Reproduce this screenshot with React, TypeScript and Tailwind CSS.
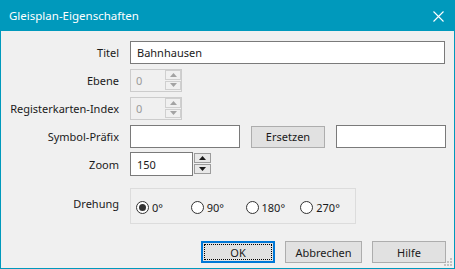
import React from 'react';

const font = { fontFamily: '"Noto Sans", "Open Sans", sans-serif' };

const Arrow = ({ up, disabled }: { up?: boolean; disabled?: boolean }) => (
    <svg width="7" height="4" viewBox="0 0 7 4">
        <polygon points={up ? '0,4 7,4 3.5,0' : '0,0 7,0 3.5,4'} fill={disabled ? '#a3a3a3' : '#1a1a1a'} />
    </svg>
);

const Label = ({ children }: { children: React.ReactNode }) => (
    <div className="w-[118px] shrink-0 text-right text-[#1a1a1a]">{children}</div>
);

const Radio = ({ label, checked }: { label: string; checked?: boolean }) => (
    <div className="w-[55px] flex items-center gap-[3px]">
        <span className="w-[13px] h-[13px] rounded-full border border-[#333333] bg-white flex items-center justify-center">
            {checked && <span className="w-[7px] h-[7px] rounded-full bg-[#333333]" />}
        </span>
        <span className="text-[#1a1a1a]">{label}</span>
    </div>
);

const Button = ({ children, primary, w }: { children: React.ReactNode; primary?: boolean; w: string }) => (
    <div
        className={`${w} h-[22px] flex items-center justify-center bg-[#e1e1e1] text-[#1a1a1a] ${
            primary ? 'border-2 border-[#0078d7] p-[1px]' : 'border border-[#adadad]'
        }`}
    >
        {primary ? (
            <div className="w-full h-full border border-dotted border-black flex items-center justify-center">{children}</div>
        ) : (
            children
        )}
    </div>
);

const DisabledSpinner = () => (
    <div className="w-[52px] h-[23px] border border-[#cccccc] flex items-stretch">
        <div className="flex-1 pl-[5px] flex items-center text-[#9a9a9a]">0</div>
        <div className="w-[16px] flex flex-col gap-[1px] pb-[1px]">
            <div className="h-[10px] border border-[#cfcfcf] flex items-center justify-center">
                <Arrow up disabled />
            </div>
            <div className="h-[10px] border border-[#cfcfcf] flex items-center justify-center">
                <Arrow disabled />
            </div>
        </div>
    </div>
);

export default function App() {
    return (
        <div style={font} className="w-[455px] h-[269px] border border-[#0099bc] bg-[#f0f0f0] flex flex-col text-[11px] leading-none select-none">
            {/* title bar */}
            <div className="h-[30px] bg-[#0099bc] flex items-center justify-between pl-[8px] pr-[10px] text-white text-[11.5px]">
                <span>Gleisplan-Eigenschaften</span>
                <svg width="11" height="11" viewBox="0 0 11 11">
                    <path d="M0.5 0.5 L10.5 10.5 M10.5 0.5 L0.5 10.5" stroke="white" strokeWidth="1.1" />
                </svg>
            </div>

            <div className="relative flex-1 flex flex-col pt-[10px]">
                <div className="flex items-center h-[23px]">
                    <Label>Titel</Label>
                    <div className="ml-[11px] w-[315px] h-[23px] border border-[#7a7a7a] bg-white flex items-center pl-[6px] text-[#1a1a1a]">
                        Bahnhausen
                    </div>
                </div>

                <div className="flex items-center h-[23px] mt-[5px]">
                    <Label>Ebene</Label>
                    <div className="ml-[11px]">
                        <DisabledSpinner />
                    </div>
                </div>

                <div className="flex items-center h-[23px] mt-[5px]">
                    <Label>Registerkarten-Index</Label>
                    <div className="ml-[11px]">
                        <DisabledSpinner />
                    </div>
                </div>

                <div className="flex items-center h-[23px] mt-[5px]">
                    <Label>Symbol-Präfix</Label>
                    <div className="ml-[11px] w-[110px] h-[23px] border border-[#7a7a7a] bg-white" />
                    <div className="ml-[11px]">
                        <Button w="w-[74px]">Ersetzen</Button>
                    </div>
                    <div className="ml-[11px] w-[110px] h-[23px] border border-[#7a7a7a] bg-white" />
                </div>

                <div className="flex items-center h-[24px] mt-[4px]">
                    <Label>Zoom</Label>
                    <div className="ml-[11px] w-[63px] h-[24px] border border-[#7a7a7a] bg-white flex items-center pl-[6px] text-[#1a1a1a]">
                        150
                    </div>
                    <div className="ml-[1px] w-[17px] h-[24px] flex flex-col gap-[1px] py-[1px]">
                        <div className="h-[10px] border border-[#9c9c9c] bg-[#e8e8e8] flex items-center justify-center">
                            <Arrow up />
                        </div>
                        <div className="h-[10px] border border-[#9c9c9c] bg-[#e8e8e8] flex items-center justify-center">
                            <Arrow />
                        </div>
                    </div>
                </div>

                <div className="flex items-start mt-[12px]">
                    <div className="pt-[10px]">
                        <Label>Drehung</Label>
                    </div>
                    <div className="ml-[11px] w-[226px] h-[36px] border border-[#dcdcdc] flex items-center pl-[5px] pt-[2px]">
                        <Radio label="0°" checked />
                        <Radio label="90°" />
                        <Radio label="180°" />
                        <Radio label="270°" />
                    </div>
                </div>

                <div className="flex items-center mt-[17px] pl-[200px] gap-[10px]">
                    <Button primary w="w-[74px]">OK</Button>
                    <Button w="w-[77px]">Abbrechen</Button>
                    <Button w="w-[74px]">Hilfe</Button>
                </div>

                {/* size grip */}
                <svg className="absolute right-[1px] bottom-[1px]" width="10" height="10" viewBox="0 0 10 10">
                    <rect x="7" y="1" width="2" height="2" fill="#c2c2c2" />
                    <rect x="4" y="4" width="2" height="2" fill="#c2c2c2" />
                    <rect x="7" y="4" width="2" height="2" fill="#c2c2c2" />
                    <rect x="1" y="7" width="2" height="2" fill="#c2c2c2" />
                    <rect x="4" y="7" width="2" height="2" fill="#c2c2c2" />
                    <rect x="7" y="7" width="2" height="2" fill="#c2c2c2" />
                </svg>
            </div>
        </div>
    );
}
